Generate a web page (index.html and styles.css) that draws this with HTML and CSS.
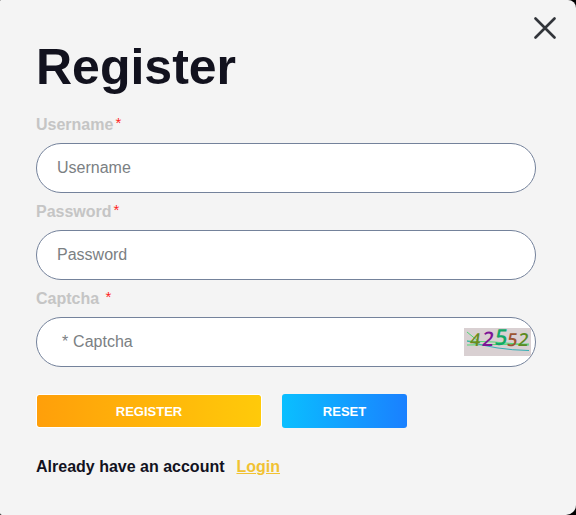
FILE: index.html
```html
<!DOCTYPE html>
<html lang="en">

<head>
    <meta charset="UTF-8">
    <meta name="viewport" content="width=device-width, initial-scale=1.0">
    <title>Register</title>
    <link rel="stylesheet" href="styles.css">
</head>

<body>
    <div class="modal">
        <button type="button" class="close" aria-label="Close">
            <svg width="22" height="22" viewBox="0 0 22 22">
                <path d="M1.5 1.5L20.5 20.5M20.5 1.5L1.5 20.5" />
            </svg>
        </button>
        <h1>Register</h1>
        <form>
            <div class="field">
                <label for="username">Username<span class="star">*</span></label>
                <input type="text" id="username" placeholder="Username">
            </div>
            <div class="field">
                <label for="password">Password<span class="star">*</span></label>
                <input type="password" id="password" placeholder="Password">
            </div>
            <div class="field">
                <label for="captcha">Captcha <span class="star">*</span></label>
                <div class="captchaBox">
                    <input type="text" id="captcha" class="captchaInput" placeholder=" * Captcha">
                    <svg class="captchaImg" width="67" height="28" viewBox="0 0 67 28">
                        <rect width="67" height="28" fill="#d9d0d2" />
                        <path d="M3 4L14 13" stroke="#4fd873" />
                        <path d="M3 17L65 16" stroke="#4fd873" />
                        <path d="M3 13L30 14L65 17" stroke="#4fd873" />
                        <path d="M3 13Q32 22 65 22.5" stroke="#35aeb4" />
                        <g class="digits" transform="translate(3 0) skewX(-8)">
                            <text x="5" y="18" font-size="18" fill="#6d8c1c">4</text>
                            <text x="17" y="17.5" font-size="20" fill="#7d1596">2</text>
                            <text x="29.5" y="17" font-size="22" fill="#12a866">5</text>
                            <text x="42" y="18" font-size="18" fill="#9c5431">5</text>
                            <text x="53" y="18" font-size="18" fill="#5c8a22">2</text>
                        </g>
                    </svg>
                </div>
            </div>
            <div class="buttons">
                <button type="submit" class="btn register">REGISTER</button>
                <button type="reset" class="btn reset">RESET</button>
            </div>
        </form>
        <p class="account">Already have an account <a href="#">Login</a></p>
    </div>
</body>

</html>
```
FILE: styles.css
```css
* {
    box-sizing: border-box;
}

body {
    margin: 0;
    background-color: #000;
    font-family: "Liberation Sans", Arial, sans-serif;
    font-size: 16px;
}

.modal {
    position: relative;
    height: 515px;
    padding: 37px 40px 0 36px;
    background-color: #f4f4f4;
    border-radius: 1px 8px 10px 2px;
    color: #12121e;
}

/* close button sits over the top right corner */
.close {
    position: absolute;
    top: 17px;
    right: 20px;
    padding: 0;
    border: 0;
    background: none;
    line-height: 0;
}

.close path {
    fill: none;
    stroke: #32353a;
    stroke-width: 2.6;
    stroke-linecap: round;
}

h1 {
    margin: 0 0 19px;
    font-size: 50px;
    line-height: 60px;
}

.field {
    height: 87px;
}

label {
    display: block;
    height: 27px;
    line-height: 18px;
    font-weight: bold;
    color: #c5c5c5;
}

/* line-height 0 so the raised star does not push the label down */
.star {
    margin-left: 2px;
    font-size: 15px;
    font-weight: normal;
    line-height: 0;
    vertical-align: 2px;
    color: #ff1f1f;
}

input {
    display: block;
    width: 100%;
    height: 50px;
    padding: 0 20px;
    border: 1px solid #74829b;
    border-radius: 25px;
    background-color: #fff;
    font-family: inherit;
    font-size: 16px;
}

input::placeholder {
    color: #7b8083;
}

.captchaBox {
    position: relative;
}

.captchaInput {
    word-spacing: 0.5px;
}

.captchaImg {
    position: absolute;
    top: 11px;
    right: 5px;
    fill: none;
    overflow: visible;
}

.digits {
    font-family: "Open Sans", "Noto Sans", sans-serif;
    font-weight: 600;
}

.buttons {
    display: flex;
    align-items: center;
    gap: 20px;
    margin-top: 17px;
}

.btn {
    height: 34px;
    padding: 0;
    border: 0;
    border-radius: 3px;
    color: #fff;
    font-family: inherit;
    font-size: 13px;
    font-weight: bold;
}

.register {
    width: 226px;
    border: 1px solid #fff;
    background: linear-gradient(to right, #ff9f0a, #ffca0a) padding-box;
}

.reset {
    width: 125px;
    background: linear-gradient(to right, #0abfff, #1a80ff);
}

.account {
    margin: 30px 0 0;
    line-height: 18px;
    font-weight: bold;
}

.account a {
    margin-left: 7.5px;
    color: #f1c232;
}
```
